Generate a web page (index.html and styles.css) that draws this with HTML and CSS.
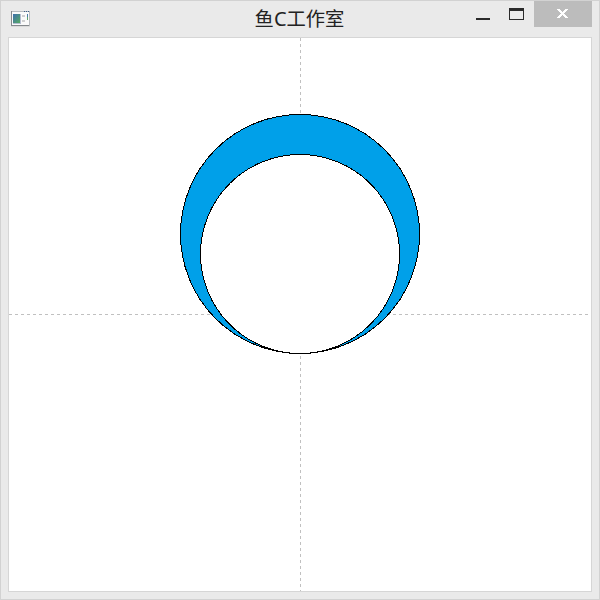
FILE: index.html
```html
<!DOCTYPE html>
<html lang="zh-CN">
<head>
<meta charset="utf-8">
<title>鱼C工作室</title>
<link rel="stylesheet" href="styles.css">
</head>
<body>
<div class="window">
  <header class="titlebar">
    <svg class="app-icon" width="19" height="16" viewBox="0 0 19 16" shape-rendering="crispEdges">
      <defs><linearGradient id="g" x1="0" y1="0" x2="1" y2="1"><stop offset="0" stop-color="#3f6fae"/><stop offset="1" stop-color="#55aa62"/></linearGradient></defs>
      <rect width="19" height="15" fill="#b9bcbf"/>
      <rect y="15" width="19" height="1" fill="#dadada"/>
      <rect width="1" height="15" fill="#85898d"/>
      <rect y="14" width="18" height="1" fill="#85898d"/>
      <rect x="1" y="1" width="17" height="13" fill="#fafafa"/>
      <path d="M13 0h1v1h-1zM15 0h1v1h-1zM17 0h1v1h-1z" fill="#3f5f8a"/>
      <rect x="2" y="3" width="8" height="10" fill="#b4bdcf"/>
      <rect x="2" y="3" width="7" height="9" fill="url(#g)"/>
      <path d="M11 4h3v2h-3zM11 9h3v2h-3z" fill="#d0d0d0"/>
      <rect x="16" y="3" width="1" height="3" fill="#4a7ba8"/>
      <rect x="16" y="6" width="1" height="3" fill="#62a56d"/>
    </svg>
    <h1 class="title">鱼<span class="latin">C</span>工作室</h1>
    <div class="controls">
      <svg width="74" height="27" viewBox="0 0 74 27" shape-rendering="crispEdges">
        <path d="M16 18h14v2h-14z" fill="#2a2a2a"/>
        <path fill-rule="evenodd" d="M49 8h15v12h-15zM50 11v8h13v-8z" fill="#2a2a2a"/>
      </svg>
      <div class="close">
        <svg width="58" height="26" viewBox="0 0 58 26" shape-rendering="crispEdges">
          <path d="M23 8h3v1h-3zM31 8h3v1h-3zM24 9h3v1h-3zM30 9h3v1h-3zM25 10h3v1h-3zM29 10h3v1h-3zM26 11h5v1h-5zM27 12h3v1h-3zM26 13h5v1h-5zM25 14h3v1h-3zM29 14h3v1h-3zM24 15h3v1h-3zM30 15h3v1h-3zM23 16h3v1h-3zM31 16h3v1h-3z" fill="#fff"/>
        </svg>
      </div>
    </div>
  </header>
  <main class="client">
    <svg class="drawing" width="582" height="553" viewBox="9 38 582 553" shape-rendering="crispEdges">
      <path class="axis" d="M9 314.5H591M300.5 38V591"/>
      <circle class="outer" cx="300" cy="234" r="119.5"/>
      <circle class="inner" cx="300" cy="254" r="99.5"/>
    </svg>
  </main>
</div>
</body>
</html>
```

FILE: styles.css
```css
* { box-sizing: border-box; }

body { margin: 0; }

.window {
  width: 600px;
  height: 600px;
  padding: 0 7px 7px;
  border: 1px solid #d2d2d2;
  background: #eaeaea;
}

.titlebar {
  display: grid;
  grid-template-columns: 132px 1fr 132px;
  height: 36px;
}

.app-icon { margin: 10px 0 0 3px; }

.title {
  margin: 4px 0 0 -1px;
  font: 400 19.3px/27px "Noto Sans CJK SC", sans-serif;
  color: #222;
  text-align: center;
}

.latin {
  font: 400 20px/20px "Noto Sans", sans-serif;
}

.controls {
  display: flex;
  height: 26px;
}

.controls svg { display: block; flex: none; margin-top: -1px; }

.close {
  width: 58px;
  height: 26px;
  background: #bcbcbc;
}

.controls .close svg { margin-top: 0; }

.client {
  width: 584px;
  height: 555px;
  border: 1px solid #d6d6d6;
  background: #fff;
}

.drawing { display: block; }

.axis {
  fill: none;
  stroke: #c0c0c0;
  stroke-dasharray: 3 3;
}

.outer, .inner { stroke: #000; stroke-width: 1; }
.outer { fill: #00a0e9; }
.inner { fill: #fff; }
```
